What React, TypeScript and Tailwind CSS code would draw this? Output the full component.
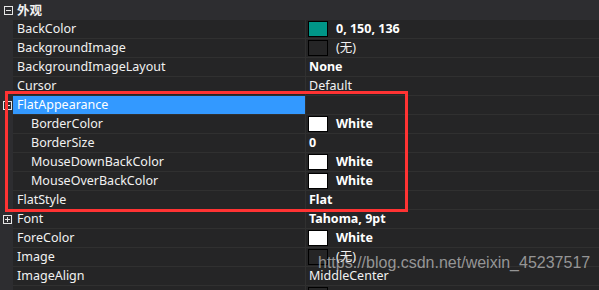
type Row = {
  name: string;
  value?: string;
  bold?: boolean;
  swatch?: string;
  indent?: boolean;
  expand?: boolean;
  selected?: boolean;
};

const rows: Row[] = [
  { name: "BackColor", value: "0, 150, 136", bold: true, swatch: "#009688" },
  { name: "BackgroundImage", value: "(无)", swatch: "#252526" },
  { name: "BackgroundImageLayout", value: "None", bold: true },
  { name: "Cursor", value: "Default" },
  { name: "FlatAppearance", expand: true, selected: true },
  { name: "BorderColor", value: "White", bold: true, swatch: "#ffffff", indent: true },
  { name: "BorderSize", value: "0", bold: true, indent: true },
  { name: "MouseDownBackColor", value: "White", bold: true, swatch: "#ffffff", indent: true },
  { name: "MouseOverBackColor", value: "White", bold: true, swatch: "#ffffff", indent: true },
  { name: "FlatStyle", value: "Flat", bold: true },
  { name: "Font", value: "Tahoma, 9pt", bold: true, expand: true },
  { name: "ForeColor", value: "White", bold: true, swatch: "#ffffff" },
  { name: "Image", value: "(无)", swatch: "#252526" },
  { name: "ImageAlign", value: "MiddleCenter" },
  // partially visible row at the bottom edge
  { name: "", swatch: "#252526" },
];

function BoxIcon({ plus }: { plus?: boolean }) {
  return (
    <svg width="9" height="9" viewBox="0 0 9 9" className="block">
      <rect x="0.5" y="0.5" width="8" height="8" fill="none" stroke="#e6e6e6" />
      <path d="M2 4.5h5" stroke="#e6e6e6" />
      {plus && <path d="M4.5 2v5" stroke="#e6e6e6" />}
    </svg>
  );
}

export default function App() {
  return (
    <div className="relative w-[599px] h-[290px] overflow-hidden bg-[#252526] text-[12.5px] text-[#f1f1f1] font-['Noto_Sans','Noto_Sans_CJK_SC',sans-serif]">
      {/* category header */}
      <div className="flex items-center h-[20px] bg-[#2d2d30]">
        <div className="w-[13px] flex justify-center pl-[3px]">
          <BoxIcon />
        </div>
        <span className="pl-[4px] font-bold font-['Noto_Sans_CJK_SC',sans-serif]">外观</span>
      </div>

      {rows.map((r, i) => (
        <div key={i} className="flex h-[19px]">
          <div className="w-[13px] shrink-0 bg-[#2d2d30] flex items-center justify-center pl-[2px]">
            {r.expand && <BoxIcon plus />}
          </div>
          <div
            className={`w-[292px] shrink-0 flex items-center border-b border-[#303030] leading-none pt-[1px] ${
              r.selected ? "bg-[#3399ff] text-white" : ""
            } ${r.indent ? "pl-[18px]" : "pl-[4px]"}`}
          >
            {r.name}
          </div>
          <div className="flex-1 flex items-center border-b border-l border-[#303030] pl-[2px] leading-none">
            {r.swatch && (
              <span
                className="w-[20px] h-[16px] border border-black mr-[8px] shrink-0"
                style={{ backgroundColor: r.swatch }}
              />
            )}
            {r.value && (
              <span className={`pt-[1px] ${r.bold ? "font-bold text-white" : ""} ${r.swatch ? "" : "pl-[1px]"}`}>
                {r.value}
              </span>
            )}
          </div>
        </div>
      ))}

      {/* red annotation box */}
      <div className="absolute left-[5px] top-[91px] w-[403px] h-[121px] border-[3px] border-[#ff3333]" />

      {/* watermark */}
      <div className="absolute left-[318px] top-[255px] text-[16px] leading-none text-[#c8c8c8]/70 font-['Liberation_Sans',sans-serif] whitespace-nowrap">
        https://blog.csdn.net/weixin_45237517
      </div>
    </div>
  );
}
